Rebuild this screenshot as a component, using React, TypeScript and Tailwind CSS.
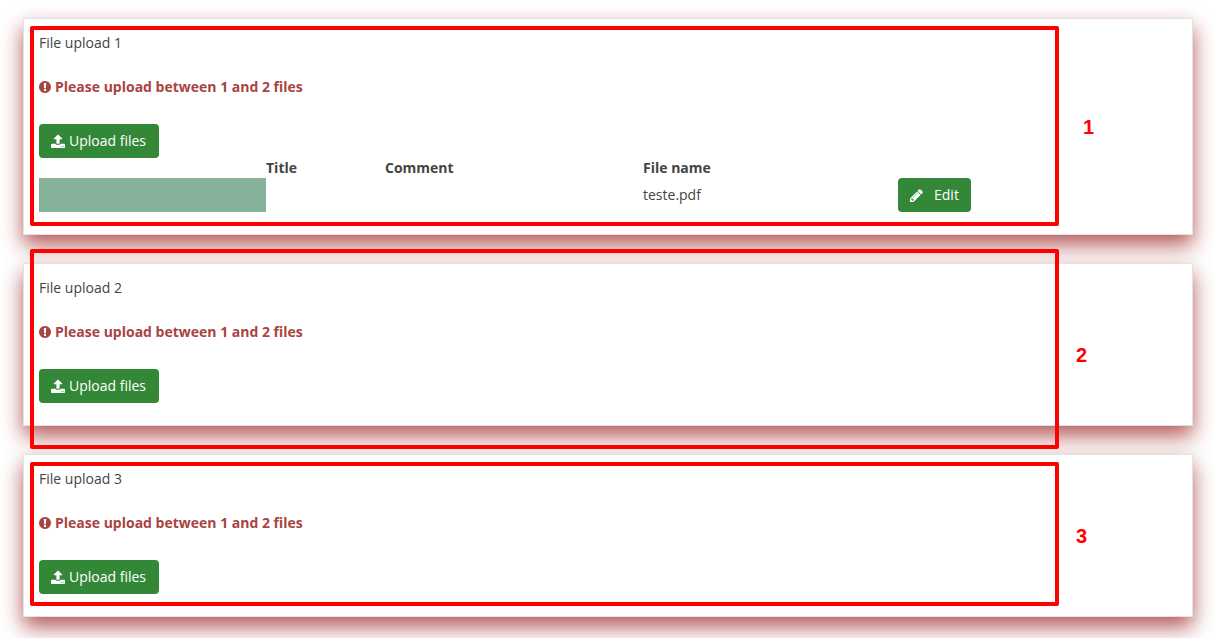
import React from 'react';

interface UploadedFile {
  title: string;
  comment: string;
  fileName: string;
}

interface UploadSection {
  id: number;
  files: UploadedFile[];
  frameClass: string;
  labelClass: string;
}

const sections: UploadSection[] = [
  {
    id: 1,
    files: [{ title: '', comment: '', fileName: 'teste.pdf' }],
    frameClass: 'top-[7px] bottom-2',
    labelClass: 'right-[98px]',
  },
  { id: 2, files: [], frameClass: '-top-[15px] -bottom-6', labelClass: 'right-[105px] pt-5' },
  { id: 3, files: [], frameClass: 'top-[7px] bottom-[10px]', labelClass: 'right-[105px]' },
];

const ExclamationIcon: React.FC = () => (
  <svg viewBox="128 0 1536 1792" className="w-3 h-3.5 shrink-0 fill-current" aria-hidden="true">
    <path d="M896 128q209 0 385.5 103t279.5 279.5 103 385.5-103 385.5-279.5 279.5-385.5 103-385.5-103-279.5-279.5-103-385.5 103-385.5 279.5-279.5 385.5-103zm128 1247v-190q0-14-9-23.5t-22-9.5h-192q-13 0-23 10t-10 23v190q0 13 10 23t23 10h192q13 0 22-9.5t9-23.5zm-2-344l18-621q0-12-10-18-10-8-24-8h-220q-14 0-24 8-10 6-10 18l17 621q0 10 10 17.5t24 7.5h185q14 0 23.5-7.5t10.5-17.5z" />
  </svg>
);

const UploadIcon: React.FC = () => (
  <svg viewBox="64 0 1664 1792" className="w-3.5 h-[15px] shrink-0 fill-current" aria-hidden="true">
    <path d="M1344 1472q0-26-19-45t-45-19-45 19-19 45 19 45 45 19 45-19 19-45zm256 0q0-26-19-45t-45-19-45 19-19 45 19 45 45 19 45-19 19-45zm128-224v320q0 40-28 68t-68 28h-1472q-40 0-68-28t-28-68v-320q0-40 28-68t68-28h427q21 56 70.5 92t110.5 36h256q61 0 110.5-36t70.5-92h427q40 0 68 28t28 68zm-325-648q-17 40-59 40h-256v448q0 26-19 45t-45 19h-256q-26 0-45-19t-19-45v-448h-256q-42 0-59-40-17-39 14-69l448-448q18-19 45-19t45 19l448 448q31 30 14 69z" />
  </svg>
);

const PencilIcon: React.FC = () => (
  <svg viewBox="128 0 1536 1792" className="w-[13px] h-[15px] shrink-0 fill-current" aria-hidden="true">
    <path d="M491 1536l91-91-235-235-91 91v107h128v128h107zm523-928q0-22-22-22-10 0-17 7l-542 542q-7 7-7 17 0 22 22 22 10 0 17-7l542-542q7-7 7-17zm-54-192l416 416-832 832h-416v-416zm683 96q0 53-37 90l-166 166-416-416 166-165q36-38 90-38 53 0 91 38l235 234q37 39 37 91z" />
  </svg>
);

const FileTable: React.FC<{ files: UploadedFile[] }> = ({ files }) => (
  <table className="w-full table-fixed border-collapse text-left">
    <colgroup>
      <col className="w-[227px]" />
      <col className="w-[119px]" />
      <col className="w-[258px]" />
      <col className="w-[255px]" />
      <col />
    </colgroup>
    <thead>
      <tr>
        <td className="p-0" />
        <th className="p-0 font-bold">Title</th>
        <th className="p-0 font-bold">Comment</th>
        <th className="p-0 font-bold">File name</th>
        <td className="p-0" />
      </tr>
    </thead>
    <tbody>
      {files.map((file) => (
        <tr key={file.fileName}>
          <td className="p-0 bg-[#86b29a]" />
          <td className="p-0">{file.title}</td>
          <td className="p-0">{file.comment}</td>
          <td className="p-0">{file.fileName}</td>
          <td className="p-0">
            <button type="button" className="flex items-center gap-[11px] h-[34px] px-3 rounded bg-[#338838] text-white">
              <PencilIcon />
              Edit
            </button>
          </td>
        </tr>
      ))}
    </tbody>
  </table>
);

const UploadCard: React.FC<{ section: UploadSection }> = ({ section }) => (
  <section className="relative border border-[#e3e3e3] bg-white px-[15px] pt-3.5 pb-[22px] shadow-[0_10px_20px_rgba(143,0,0,0.65)]">
    <h2>File upload {section.id}</h2>
    <p className="mt-6 flex items-center gap-1 font-bold text-[#a94442]">
      <ExclamationIcon />
      Please upload between 1 and 2 files
    </p>
    <button type="button" className="mt-[27px] flex items-center gap-1 h-[34px] pl-3 pr-[13px] rounded bg-[#338838] text-white">
      <UploadIcon />
      Upload files
    </button>
    {section.files.length > 0 && <FileTable files={section.files} />}

    {/* Review markup */}
    <div className={`absolute z-10 left-1.5 right-[133px] rounded-xs border-4 border-[#ff0000] pointer-events-none ${section.frameClass}`} />
    <span className={`absolute inset-y-0 flex items-center font-['Liberation_Sans',sans-serif] text-xl font-bold text-[#ff0000] ${section.labelClass}`}>
      {section.id}
    </span>
  </section>
);

const App: React.FC = () => (
  <main className="flex flex-col gap-7 bg-white pt-[18px] pb-[21px] pl-[23px] pr-[22px] font-['Open_Sans',sans-serif] text-sm/5 text-[#444444]">
    {sections.map((section) => (
      <UploadCard key={section.id} section={section} />
    ))}
  </main>
);

export default App;
